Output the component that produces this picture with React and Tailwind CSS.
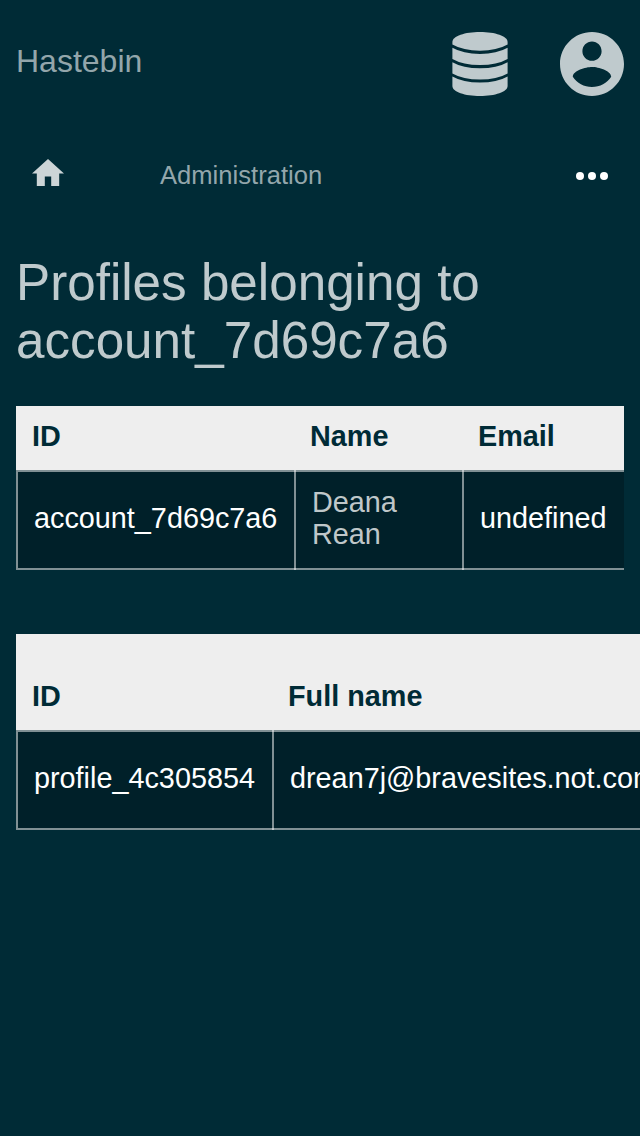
const DatabaseIcon = () => (
  <svg className="h-16 w-14" viewBox="0 0 56 64" fill="currentColor" aria-hidden="true">
    <path d="M28 0C13 0 0.4 4 0.4 10V12.6Q11 18.7 28 18.7T55.6 12.6V10C55.6 4 43 0 28 0Z" />
    <path d="M0.4 15.8Q11 21.9 28 21.9T55.6 15.8V27Q45 33.1 28 33.1T0.4 27Z" />
    <path d="M0.4 30.2Q11 36.3 28 36.3T55.6 30.2V41.5Q45 47.6 28 47.6T0.4 41.5Z" />
    <path d="M0.4 44.5Q11 50.6 28 50.6T55.6 44.5V54C55.6 60 43 64 28 64S0.4 60 0.4 54Z" />
  </svg>
);

const AccountIcon = () => (
  <svg className="size-16" viewBox="2 2 20 20" fill="currentColor" aria-hidden="true">
    <path d="M12 2C6.48 2 2 6.48 2 12s4.48 10 10 10 10-4.48 10-10S17.52 2 12 2zm0 3c1.66 0 3 1.34 3 3s-1.34 3-3 3-3-1.34-3-3 1.34-3 3-3zm0 14.2c-2.5 0-4.71-1.28-6-3.22.03-1.99 4-3.08 6-3.08 1.99 0 5.97 1.09 6 3.08-1.29 1.94-3.5 3.22-6 3.22z" />
  </svg>
);

const HomeIcon = () => (
  <svg className="h-[27.2px] w-8" viewBox="2 3 20 17" fill="currentColor" aria-hidden="true">
    <path d="M10 20v-6h4v6h5v-8h3L12 3 2 12h3v8z" />
  </svg>
);

const MoreIcon = () => (
  <svg className="h-2 w-8" viewBox="0 0 32 8" fill="currentColor" aria-hidden="true">
    <circle cx="4" cy="4" r="4" />
    <circle cx="16" cy="4" r="4" />
    <circle cx="28" cy="4" r="4" />
  </svg>
);

const cell = "flex h-[100px] items-center border-y-2 border-white/50 bg-[#002029] pb-1 pr-4";
const firstCell = "border-l-2 pl-4";
// The divider is painted under the horizontal borders so that their crossings come out lighter.
const nextCell =
  "bg-[linear-gradient(rgb(255_255_255/0.5),rgb(255_255_255/0.5))] bg-[length:2px_100%] bg-no-repeat bg-origin-border pl-[18px]";

export default function App() {
  return (
    <div className="h-[1136px] w-[640px] overflow-hidden bg-[#002b36] font-['Liberation_Sans',Arial,sans-serif] text-[28.8px] leading-8 text-white">
      <header className="flex h-32 items-center justify-between px-4">
        <span className="pb-1.5 text-[32px] text-[#93a6ab]">Hastebin</span>
        <div className="flex items-center gap-[52px] text-[#bfcacd]">
          <DatabaseIcon />
          <AccountIcon />
        </div>
      </header>

      <nav className="flex h-24 items-center px-8">
        <a className="w-32 pb-[7px] text-[#ccd5d7]"><HomeIcon /></a>
        <span className="pb-0.5 text-[25.6px] text-[#93a6ab]">Administration</span>
        <button className="ml-auto text-white" aria-label="More"><MoreIcon /></button>
      </nav>

      <main className="px-4 pt-[30px]">
        <h1 className="text-[51.2px] leading-[58px] text-[#bfcacd]">
          Profiles belonging to<br />account_7d69c7a6
        </h1>

        <section className="mt-9 w-[608px]">
          <div className="grid h-16 grid-cols-[278px_168px_162px] items-center bg-[#eeeeee] pb-1 font-bold text-[#002b36]">
            <span className="pl-4">ID</span>
            <span className="pl-4">Name</span>
            <span className="pl-4">Email</span>
          </div>
          <div className="grid grid-cols-[278px_168px_162px]">
            <div className={`${cell} ${firstCell}`}>account_7d69c7a6</div>
            <div className={`${cell} ${nextCell}`}><span className="text-[#bfc7c9]">Deana<br />Rean</span></div>
            <div className={`${cell} ${nextCell}`}>undefined</div>
          </div>
        </section>

        <section className="mt-16 w-[700px]">
          <div className="grid h-24 grid-cols-[256px_444px] items-end bg-[#eeeeee] pb-[18px] font-bold text-[#002b36]">
            <span className="pl-4">ID</span>
            <span className="pl-4">Full name</span>
          </div>
          <div className="grid grid-cols-[256px_444px]">
            <div className={`${cell} ${firstCell}`}>profile_4c305854</div>
            <div className={`${cell} ${nextCell}`}>drean7j@bravesites.not.com</div>
          </div>
        </section>
      </main>
    </div>
  );
}
